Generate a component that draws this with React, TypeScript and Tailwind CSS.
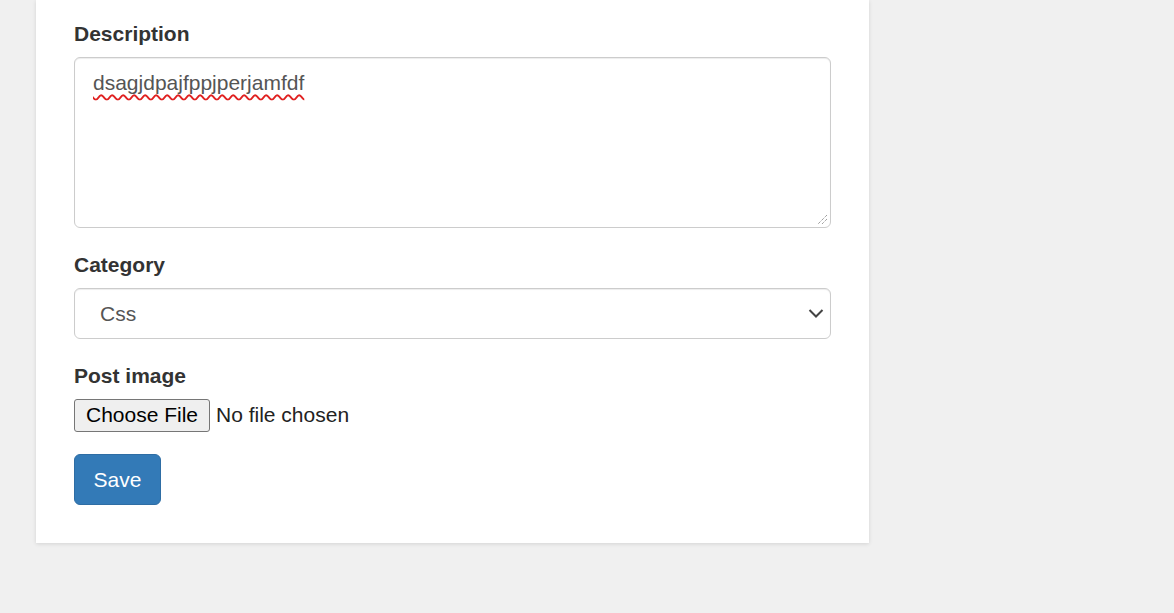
import React from "react";

export default function App() {
  return (
    <div
      className="min-h-[613px] w-full bg-[#f0f0f0] text-[#333]"
      style={{ fontFamily: '"Liberation Sans", Arial, sans-serif' }}
    >
      <div className="ml-[36px] w-[833px] bg-white px-[38px] pt-[19px] pb-[38px] shadow-[0_1px_4px_rgba(0,0,0,0.12)]">
        <div className="mb-[22.5px]">
          <label className="mb-[7.5px] block text-[21px] font-bold leading-[30px]">Description</label>
          <div className="relative h-[171px] w-full rounded-[6px] border border-[#ccc] px-[18px] pt-[10px] pb-[8px] text-[21px] leading-[30px] text-[#555] shadow-[inset_0_1px_1px_rgba(0,0,0,0.075)]">
            <span className="underline decoration-wavy decoration-[#e02020] decoration-[1.5px] underline-offset-[4px] [text-decoration-skip-ink:none]">
              dsagjdpajfppjperjamfdf
            </span>
            <svg className="absolute right-[2px] bottom-[2px]" width="12" height="12" viewBox="0 0 12 12">
              <path d="M11 2 L2 11 M11 6 L6 11" stroke="#777" strokeWidth="1" strokeDasharray="1 1" fill="none" />
            </svg>
          </div>
        </div>
        <div className="mb-[22.5px]">
          <label className="mb-[7.5px] block text-[21px] font-bold leading-[30px]">Category</label>
          <div className="relative flex h-[51px] w-full items-center rounded-[6px] border border-[#ccc] pl-[25px] pt-[2px] text-[21px] text-[#555] shadow-[inset_0_1px_1px_rgba(0,0,0,0.075)]">
            Css
            <svg className="absolute right-[6px] top-[19px]" width="16" height="11" viewBox="0 0 16 11">
              <path d="M1.5 2 L8 8.5 L14.5 2" stroke="#444" strokeWidth="2" fill="none" />
            </svg>
          </div>
        </div>
        <div className="mb-[22.5px]">
          <label className="mb-[7.5px] block text-[21px] font-bold leading-[30px]">Post image</label>
          <div className="flex h-[33px] items-center text-[21px] text-[#222]">
            <div className="flex h-[33px] w-[136px] items-center justify-center rounded-[3px] border border-[#767676] bg-[#efefef] text-black">
              Choose File
            </div>
            <span className="ml-[6px]">No file chosen</span>
          </div>
        </div>
        <div className="flex h-[51px] w-[87px] items-center justify-center rounded-[6px] border border-[#2e6da4] bg-[#337ab7] text-[21px] text-white">
          Save
        </div>
      </div>
    </div>
  );
}
